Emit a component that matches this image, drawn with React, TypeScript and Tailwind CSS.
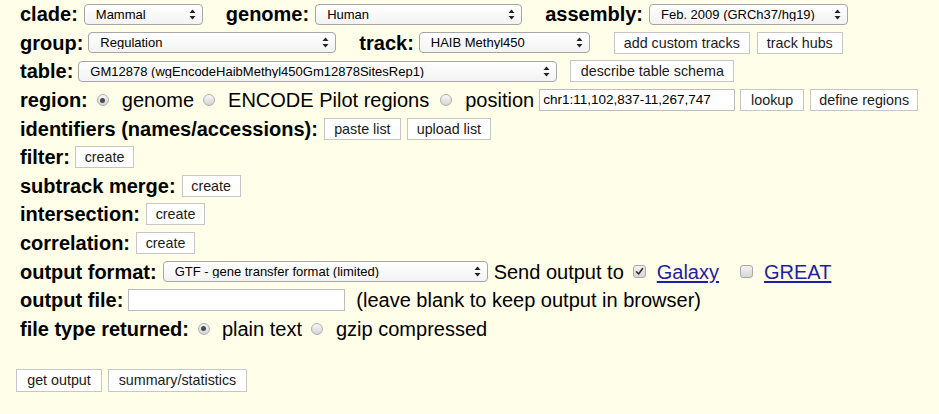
import React from 'react';

// double arrow shown at the right end of a select box
function Arrows() {
  return (
    <svg width="7" height="11" viewBox="0 0 7 11" className="shrink-0">
      <path d="M3.5 0.5 L6.5 4 L0.5 4 Z" fill="#222" />
      <path d="M3.5 10.5 L6.5 7 L0.5 7 Z" fill="#222" />
    </svg>
  );
}

function Select({ value, className = '' }: { value: string; className?: string }) {
  return (
    <div
      className={`flex h-[21px] shrink-0 items-center justify-between rounded-[4px] border border-[#a6a6a6] bg-gradient-to-b from-white to-[#f3f3f3] pl-[11px] pr-[6px] text-[13px] leading-none text-black ${className}`}
    >
      <span className="truncate">{value}</span>
      <Arrows />
    </div>
  );
}

function Button({ children, className = '' }: { children: React.ReactNode; className?: string }) {
  return (
    <button
      type="button"
      className={`flex h-[22px] shrink-0 items-center justify-center border border-[#c6c6c6] bg-white text-[14.3px] leading-none text-[#1a1a1a] ${className}`}
    >
      {children}
    </button>
  );
}

function Radio({ checked = false, className = '' }: { checked?: boolean; className?: string }) {
  return (
    <span
      className={`flex h-[12px] w-[12px] shrink-0 items-center justify-center rounded-full border border-[#b0b0b0] bg-gradient-to-b from-[#f8f8f8] to-[#d4d4d4] ${className}`}
    >
      {checked && <span className="h-[5px] w-[5px] rounded-full bg-[#4a4a4a]" />}
    </span>
  );
}

function Checkbox({ checked = false, className = '' }: { checked?: boolean; className?: string }) {
  return (
    <span
      className={`flex h-[13px] w-[13px] shrink-0 items-center justify-center rounded-[3px] border border-[#a9a9a9] bg-gradient-to-b from-[#f2f2f2] to-[#d6d6d6] ${className}`}
    >
      {checked && (
        <svg width="9" height="9" viewBox="0 0 9 9">
          <path d="M1.5 4.8 L3.6 7 L7.6 1.6" stroke="#333" strokeWidth="1.6" fill="none" strokeLinecap="round" strokeLinejoin="round" />
        </svg>
      )}
    </span>
  );
}

function Label({ children, className = '' }: { children: React.ReactNode; className?: string }) {
  return <span className={`shrink-0 whitespace-nowrap font-bold ${className}`}>{children}</span>;
}

function Row({ children }: { children: React.ReactNode }) {
  return <div className="flex h-[28.6px] items-center whitespace-nowrap">{children}</div>;
}

function TextInput({ value = '', className = '' }: { value?: string; className?: string }) {
  return (
    <div
      className={`flex h-[22px] shrink-0 items-center border border-[#bdbdbd] bg-white px-[3px] text-[13.5px] leading-none text-black ${className}`}
    >
      {value}
    </div>
  );
}

export default function App() {
  return (
    <div className="min-h-[414px] w-full bg-[#fffee8] font-['Liberation_Sans',Arial,sans-serif] text-[20px] leading-none text-black">
      <div className="px-5">
        <Row>
          <Label>clade:</Label>
          <Select value="Mammal" className="ml-[6px] w-[119px]" />
          <Label className="ml-[23px]">genome:</Label>
          <Select value="Human" className="ml-[6px] w-[207px]" />
          <Label className="ml-[23px]">assembly:</Label>
          <Select value="Feb. 2009 (GRCh37/hg19)" className="ml-[6px] w-[199px]" />
        </Row>
        <Row>
          <Label>group:</Label>
          <Select value="Regulation" className="ml-[5px] w-[248px]" />
          <Label className="ml-[23px]">track:</Label>
          <Select value="HAIB Methyl450" className="ml-[5px] w-[171px]" />
          <Button className="ml-[24px] w-[136px]">add custom tracks</Button>
          <Button className="ml-[7px] w-[86px]">track hubs</Button>
        </Row>
        <Row>
          <Label>table:</Label>
          <Select value="GM12878 (wgEncodeHaibMethyl450Gm12878SitesRep1)" className="ml-[5px] w-[479px]" />
          <Button className="ml-[13px] w-[164px]">describe table schema</Button>
        </Row>
        <Row>
          <Label>region:</Label>
          <Radio checked className="ml-[9px]" />
          <span className="ml-[13px]">genome</span>
          <Radio className="ml-[9px]" />
          <span className="ml-[13px]">ENCODE Pilot regions</span>
          <Radio className="ml-[11px]" />
          <span className="ml-[13px]">position</span>
          <TextInput value="chr1:11,102,837-11,267,747" className="ml-[5px] w-[196px]" />
          <Button className="ml-[5px] w-[64px]">lookup</Button>
          <Button className="ml-[6px] w-[108px]">define regions</Button>
        </Row>
        <Row>
          <Label>identifiers (names/accessions):</Label>
          <Button className="ml-[6px] w-[77px]">paste list</Button>
          <Button className="ml-[6px] w-[84px]">upload list</Button>
        </Row>
        <Row>
          <Label>filter:</Label>
          <Button className="ml-[5px] w-[59px]">create</Button>
        </Row>
        <Row>
          <Label>subtrack merge:</Label>
          <Button className="ml-[6px] w-[59px]">create</Button>
        </Row>
        <Row>
          <Label>intersection:</Label>
          <Button className="ml-[6px] w-[59px]">create</Button>
        </Row>
        <Row>
          <Label>correlation:</Label>
          <Button className="ml-[6px] w-[59px]">create</Button>
        </Row>
        <Row>
          <Label>output format:</Label>
          <Select value="GTF - gene transfer format (limited)" className="ml-[6px] w-[325px]" />
          <span className="ml-[6px]">Send output to</span>
          <Checkbox checked className="ml-[9px]" />
          <a href="#" className="ml-[11px] text-[#1f1fa3] underline underline-offset-2">Galaxy</a>
          <Checkbox className="ml-[21px]" />
          <a href="#" className="ml-[11px] text-[#1f1fa3] underline underline-offset-2">GREAT</a>
        </Row>
        <Row>
          <Label>output file:</Label>
          <TextInput className="ml-[5px] w-[217px]" />
          <span className="ml-[11px]">(leave blank to keep output in browser)</span>
        </Row>
        <Row>
          <Label>file type returned:</Label>
          <Radio checked className="ml-[9px]" />
          <span className="ml-[12px]">plain text</span>
          <Radio className="ml-[9px]" />
          <span className="ml-[13px]">gzip compressed</span>
        </Row>
      </div>
      <div className="mt-[26px] flex gap-[6px] pl-4">
        <Button className="h-[23px] w-[86px]">get output</Button>
        <Button className="h-[23px] w-[139px]">summary/statistics</Button>
      </div>
    </div>
  );
}
